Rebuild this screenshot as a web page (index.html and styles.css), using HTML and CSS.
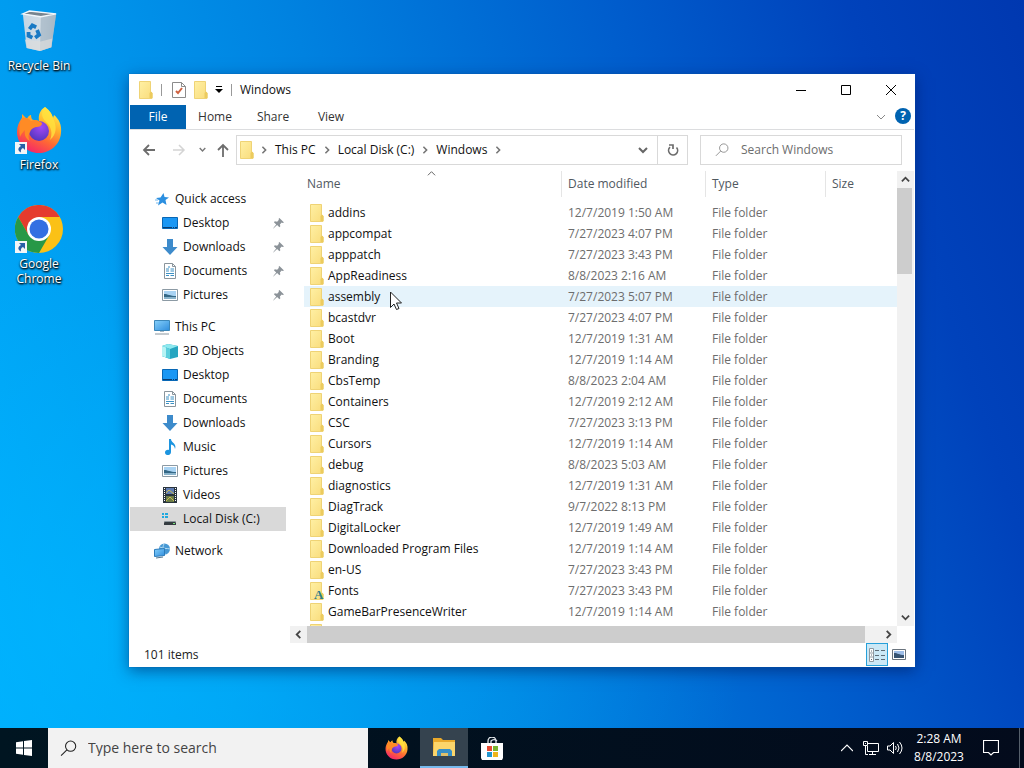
FILE: index.html
```
<!DOCTYPE html>
<html lang="en">
<head>
<meta charset="utf-8">
<title>Windows</title>
<link rel="stylesheet" href="styles.css">
</head>
<body>
<svg class="defs" aria-hidden="true">
  <defs>
    <linearGradient id="g-folder" x1="0" y1="0" x2="1" y2="1"><stop offset="0" stop-color="#fff0a4"/><stop offset="1" stop-color="#f9dc7c"/></linearGradient>
    <linearGradient id="g-blue" x1="0" y1="0" x2="1" y2="1"><stop offset="0" stop-color="#86d0fb"/><stop offset="1" stop-color="#2f8ddd"/></linearGradient>
    <linearGradient id="g-ff" x1=".8" y1="0" x2=".3" y2="1"><stop offset="0" stop-color="#fff44f"/><stop offset=".35" stop-color="#ffb52c"/><stop offset=".65" stop-color="#ff6a33"/><stop offset="1" stop-color="#f5236c"/></linearGradient>
    <radialGradient id="g-ffc" cx=".6" cy=".3" r=".8"><stop offset="0" stop-color="#a347f5"/><stop offset="1" stop-color="#4a36b8"/></radialGradient>
    <linearGradient id="g-bin" x1="0" y1="0" x2="1" y2="0"><stop offset="0" stop-color="#c3d5e4"/><stop offset=".6" stop-color="#d3dde5"/><stop offset="1" stop-color="#a4b4c2"/></linearGradient>
  </defs>
  <symbol id="i-folder" viewBox="0 0 14 18"><path d="M.5.5h11v10.500l1.500 1v5.500h-12.500z" fill="url(#g-folder)" stroke="#efd375"/><path d="M10.500 17v-5l1.500-1.500 1.500 1.500v5z" fill="#eccb5e"/></symbol>
  <symbol id="i-fonts" viewBox="0 0 14 18"><use href="#i-folder" width="14" height="18"/><text x="4" y="17" class="glyph">A</text></symbol>
  <symbol id="i-star" viewBox="0 0 16 16"><path d="M9.500 2l1 4 4.500.5-3.500 2.500 1 5-4-2.500-4.500 3 1.500-5L2 7l4.500-.5z" fill="#2b8fe0"/><path d="M1 9h3M2 12h3" stroke="#74b8ec"/></symbol>
  <symbol id="i-desktop" viewBox="0 0 16 16"><path d="M.5 2.500h15v11h-15z" fill="#1a97f4" stroke="#0867b5"/><path d="M1 12.500h14" stroke="#0a3d70" stroke-dasharray="9 1 1 1"/></symbol>
  <symbol id="i-down" viewBox="0 0 16 16"><path d="M5 0h6v8h4.500L8 16 .5 8H5z" fill="#3d8bcb"/></symbol>
  <symbol id="i-doc" viewBox="0 0 16 16"><path d="M2.500.5h8l3 3v12h-11z" fill="#fff" stroke="#8a959c"/><path d="M10.500.5v3h3" fill="none" stroke="#8a959c"/><path d="M4 6h3M8.500 6h3.500M4 8h3M8.500 8h3.500M4 10.500h8M4 12.500h3M8.500 12.500h3.500M6 4h2" stroke="#3c91c4"/></symbol>
  <symbol id="i-pic" viewBox="0 0 16 16"><path d="M.5 2.500h15v11h-15z" fill="#fff" stroke="#8c9aa4"/><path d="M2 4h12v8H2z" fill="#a9d3f3"/><path d="M2 7c4 0 6 2 12 2v3H2z" fill="#356886"/><path d="M2 10h12v2H2z" fill="#89b3cb"/></symbol>
  <symbol id="i-pc" viewBox="0 0 16 16"><path d="M.5 1.500h15v10h-15z" fill="url(#g-blue)" stroke="#3c87b9"/><path d="M6 12h4v1H6z" fill="#a8b9c4"/><path d="M1 15h14" stroke="#8996a0"/></symbol>
  <symbol id="i-cube" viewBox="0 0 16 16"><path d="M0 3l6-2 10 2v11l-8 2-8-3z" fill="#25a5c0"/><path d="M0 3l6-2 10 2-8 3z" fill="#8ee9ef"/><path d="M0 3l8 3v10l-8-3z" fill="#5bcfdd"/><path d="M0 3l4 1.500v10L0 13z" fill="#b6f3f4"/></symbol>
  <symbol id="i-music" viewBox="0 0 16 16"><path d="M7 0h2c0 4 6 4 4 10-.500-3-2-4-4-4.500V13c0 4-6 4-6 .5 0-2 2-3 4-2.500z" fill="#1c94df"/></symbol>
  <symbol id="i-video" viewBox="0 0 16 16"><path d="M1 0h14v16H1z" fill="#29343e"/><path d="M4 1h8v6H4z" fill="#617db3"/><path d="M4 9h8v6H4z" fill="#6c7d48"/><path d="M4 6l3-3 5 4M4 14l4-4 4 4" stroke="#c9ba51" fill="none"/><path d="M2.500 1v14M13.500 1v14" stroke="#fff" stroke-dasharray="1 1"/></symbol>
  <symbol id="i-disk" viewBox="0 0 16 16"><path d="M0 2h2v2H0zM3 2h3v2H3zM0 5h2v2H0zM3 5h3v2H3z" fill="#20a9df"/><path d="M3 10h10l1 2v2H2v-2z" fill="#343b40"/><path d="M3 10h10l1 1H2z" fill="#8e989e"/><path d="M11 12h2v1h-2z" fill="#7ae57c"/></symbol>
  <symbol id="i-net" viewBox="0 0 16 16"><circle cx="10.500" cy="6" r="5.500" fill="#4798d4"/><path d="M6 4c3 2 7 1 10 2M10 1c-2 4-1 7 1 10" stroke="#b7def3" fill="none"/><path d="M.5 6.500l10-1v7l-10 1z" fill="url(#g-blue)" stroke="#2b7bbb"/><path d="M2 15l7-1" stroke="#52758e"/></symbol>
  <symbol id="i-pin" viewBox="0 0 12 12"><path d="M7 0l5 5-1.500.5-1-.5-2 2 .5 2-1 1-2.500-2.500L1 11l-1 1 1-2 2.500-3L1 4.500l1-1 2.500.5 2-2-.5-1z" fill="#8c9399"/></symbol>
  <symbol id="i-chev" viewBox="0 0 10 10"><path d="M1 3l4 4 4-4" fill="none" stroke="currentColor" stroke-width="2"/></symbol>
  <symbol id="i-chev-thin" viewBox="0 0 10 10"><path d="M1 3l4 4 4-4" fill="none" stroke="currentColor"/></symbol>
  <symbol id="i-glass" viewBox="0 0 16 16"><circle cx="10" cy="5.800" r="4.800" fill="none" stroke="currentColor"/><path d="M6.500 9.200L1 14.700" stroke="currentColor"/></symbol>
  <symbol id="i-firefox" viewBox="0 0 46 48"><path d="M29 1c5 4 7 7 8 11l1-3c5 4 8 10 7 18-1 12-11 20-22 20C10 47 1 37 1 26c0-6 2-10 5-14V8l5 5c1-3 3-4 4-4 0 3 1 5 3 5l5 1c-1-6 1-11 6-14z" fill="url(#g-ff)"/><path d="M29 1c5 4 7 7 8 11 4 8 4 16-3 22 3-7 1-13-3-17-5-5-7-9-2-16z" fill="#ffe23e" opacity=".8"/><circle cx="23" cy="25" r="10" fill="url(#g-ffc)"/><path d="M6 12c5-1 7 1 9 3 4-2 7-1 11 2 0 3-3 4-6 4-3 1-5 2-6 5-2 3-2 6 0 9-4-2-6-6-5-11-2 2-4 4-5 7-1-7-1-12 2-19z" fill="#ff8b25"/></symbol>
  <symbol id="i-chrome" viewBox="0 0 48 48"><circle cx="24" cy="24" r="24" fill="#fbc116"/><path d="M3.200 12A24 24 0 0 1 44.800 12H24L13.600 30z" fill="#e53b2e"/><path d="M3.200 12A24 24 0 0 0 24 48l10.400-18-20.800 0z" fill="#279847"/><circle cx="24" cy="24" r="12" fill="#fff"/><circle cx="24" cy="24" r="9.500" fill="#346fe2"/></symbol>
  <symbol id="i-link" viewBox="0 0 12 12"><path d="M0 0h12v12H0z" fill="#f3f5f7"/><path d="M4 2h6v6L8 6C6 7 5.500 8.500 6 10.500 2.500 8.500 2.500 6 6 4z" fill="#285fa7"/></symbol>
</svg>

<main class="desktop">
  <nav class="shortcuts" aria-label="Desktop">
    <button class="shortcut"><span class="art"><svg class="bin" viewBox="0 0 40 44"><path d="M3 4L10 1l28 3-5 35-12 4-14-3z" fill="url(#g-bin)"/><path d="M22 7l16-3-5 35-12 4z" fill="#a9bac8" opacity=".8"/><path d="M3 4l7-3 28 3-16 3z" fill="#77848e" stroke="#f1f6fa" stroke-width="1.500"/><path d="M5 31l17 2 12-3-1 9-12 4-14-3z" fill="#ddd" opacity=".7"/><g fill="none" stroke="#1879c4" stroke-width="4"><path d="M10 20l3-4 4 2"/><path d="M18 21l2 5-4 3"/><path d="M13 29l-4-2v-4"/></g></svg></span><span>Recycle Bin</span></button>
    <button class="shortcut"><span class="art"><svg class="fox"><use href="#i-firefox"/></svg><svg class="link"><use href="#i-link"/></svg></span><span>Firefox</span></button>
    <button class="shortcut"><span class="art"><svg class="chrome"><use href="#i-chrome"/></svg><svg class="link"><use href="#i-link"/></svg></span><span>Google Chrome</span></button>
  </nav>

  <section class="window" aria-label="Windows">
    <header class="titlebar">
      <svg class="folder"><use href="#i-folder"/></svg><i class="bar"></i>
      <button aria-label="Properties"><svg class="props" viewBox="0 0 14 16"><path d="M.5.5h9l4 4v11H.5z" fill="#fff" stroke="#8b8b8b"/><path d="M9.500.5v4h4" fill="none" stroke="#8b8b8b"/><path d="M4 9l2 2 4-5" fill="none" stroke="#cf6240" stroke-width="2"/></svg></button>
      <button aria-label="New folder"><svg class="folder"><use href="#i-folder"/></svg></button>
      <button aria-label="Customize toolbar"><svg class="custom" viewBox="0 0 8 8"><path d="M1 .5h6" stroke="#000"/><path d="M0 3h8L4 7z"/></svg></button><i class="bar"></i>
      <h1>Windows</h1>
      <div class="controls">
        <button aria-label="Minimize"><svg viewBox="0 0 10 10"><path d="M0 5.500h10" stroke="#000"/></svg></button>
        <button aria-label="Maximize"><svg viewBox="0 0 10 10"><path d="M.5.5h9v9h-9z" fill="none" stroke="#000"/></svg></button>
        <button aria-label="Close"><svg viewBox="0 0 10 10"><path d="M0 0l10 10M10 0L0 10" stroke="#000"/></svg></button>
      </div>
    </header>
    <div class="ribbon">
      <button class="file">File</button><button>Home</button><button>Share</button><button>View</button>
      <button class="expand" aria-label="Expand ribbon"><svg><use href="#i-chev-thin"/></svg></button>
      <button class="help" aria-label="Help">?</button>
    </div>
    <div class="navigate">
      <div class="history">
        <button aria-label="Back"><svg viewBox="0 0 14 14"><path d="M13 7H2M7 2L2 7l5 5" fill="none" stroke="#6d6d6d" stroke-width="1.800"/></svg></button>
        <button aria-label="Forward"><svg viewBox="0 0 14 14"><path d="M1 7h11M7 2l5 5-5 5" fill="none" stroke="#d4d4d4" stroke-width="1.500"/></svg></button>
        <button class="recent" aria-label="Recent locations"><svg class="tiny"><use href="#i-chev"/></svg></button>
        <button class="up" aria-label="Up"><svg viewBox="0 0 14 14"><path d="M7 14V2M2 7l5-5 5 5" fill="none" stroke="#6d6d6d" stroke-width="1.800"/></svg></button>
      </div>
      <div class="address">
        <svg class="folder"><use href="#i-folder"/></svg><svg class="sep"><use href="#i-chev"/></svg>
        <a href="#pc">This PC</a><svg class="sep"><use href="#i-chev"/></svg>
        <a href="#c">Local Disk (C:)</a><svg class="sep"><use href="#i-chev"/></svg>
        <a href="#windows">Windows</a><svg class="sep"><use href="#i-chev"/></svg>
        <button class="previous" aria-label="Previous locations"><svg><use href="#i-chev"/></svg></button>
        <button class="refresh" aria-label="Refresh"><svg viewBox="0 0 12 12"><path d="M9.500 3.500A4.500 4.500 0 1 1 3 3.200M2 1h4v4" fill="none" stroke="#6d6d6d" stroke-width="1.700"/></svg></button>
      </div>
      <label class="search"><svg><use href="#i-glass"/></svg><input type="search" placeholder="Search Windows" aria-label="Search Windows"></label>
    </div>

    <div class="body">
      <nav class="tree" aria-label="Navigation pane">
        <ul>
          <li><a href="#quick"><svg><use href="#i-star"/></svg>Quick access</a>
            <ul>
              <li><a href="#desktop"><svg><use href="#i-desktop"/></svg>Desktop<svg class="pin"><use href="#i-pin"/></svg></a></li>
              <li><a href="#downloads"><svg><use href="#i-down"/></svg>Downloads<svg class="pin"><use href="#i-pin"/></svg></a></li>
              <li><a href="#documents"><svg><use href="#i-doc"/></svg>Documents<svg class="pin"><use href="#i-pin"/></svg></a></li>
              <li><a href="#pictures"><svg><use href="#i-pic"/></svg>Pictures<svg class="pin"><use href="#i-pin"/></svg></a></li>
            </ul></li>
          <li><a href="#pc"><svg><use href="#i-pc"/></svg>This PC</a>
            <ul>
              <li><a href="#3d"><svg><use href="#i-cube"/></svg>3D Objects</a></li>
              <li><a href="#desktop"><svg><use href="#i-desktop"/></svg>Desktop</a></li>
              <li><a href="#documents"><svg><use href="#i-doc"/></svg>Documents</a></li>
              <li><a href="#downloads"><svg><use href="#i-down"/></svg>Downloads</a></li>
              <li><a href="#music"><svg><use href="#i-music"/></svg>Music</a></li>
              <li><a href="#pictures"><svg><use href="#i-pic"/></svg>Pictures</a></li>
              <li><a href="#videos"><svg><use href="#i-video"/></svg>Videos</a></li>
              <li><a class="selected" href="#c"><svg><use href="#i-disk"/></svg>Local Disk (C:)</a></li>
            </ul></li>
          <li><a href="#network"><svg><use href="#i-net"/></svg>Network</a></li>
        </ul>
      </nav>

      <div class="files">
        <div class="list">
          <table>
            <colgroup><col class="c-name"><col class="c-date"><col class="c-type"><col></colgroup>
            <thead><tr><th>Name<svg class="sort"><use href="#i-chev-thin"/></svg></th><th>Date modified</th><th>Type</th><th>Size</th></tr></thead>
            <tbody>
              <tr><td><svg><use href="#i-folder"/></svg>addins</td><td>12/7/2019 1:50 AM</td><td>File folder</td><td></td></tr>
              <tr><td><svg><use href="#i-folder"/></svg>appcompat</td><td>7/27/2023 4:07 PM</td><td>File folder</td><td></td></tr>
              <tr><td><svg><use href="#i-folder"/></svg>apppatch</td><td>7/27/2023 3:43 PM</td><td>File folder</td><td></td></tr>
              <tr><td><svg><use href="#i-folder"/></svg>AppReadiness</td><td>8/8/2023 2:16 AM</td><td>File folder</td><td></td></tr>
              <tr class="hover"><td><svg><use href="#i-folder"/></svg>assembly</td><td>7/27/2023 5:07 PM</td><td>File folder</td><td></td></tr>
              <tr><td><svg><use href="#i-folder"/></svg>bcastdvr</td><td>7/27/2023 4:07 PM</td><td>File folder</td><td></td></tr>
              <tr><td><svg><use href="#i-folder"/></svg>Boot</td><td>12/7/2019 1:31 AM</td><td>File folder</td><td></td></tr>
              <tr><td><svg><use href="#i-folder"/></svg>Branding</td><td>12/7/2019 1:14 AM</td><td>File folder</td><td></td></tr>
              <tr><td><svg><use href="#i-folder"/></svg>CbsTemp</td><td>8/8/2023 2:04 AM</td><td>File folder</td><td></td></tr>
              <tr><td><svg><use href="#i-folder"/></svg>Containers</td><td>12/7/2019 2:12 AM</td><td>File folder</td><td></td></tr>
              <tr><td><svg><use href="#i-folder"/></svg>CSC</td><td>7/27/2023 3:13 PM</td><td>File folder</td><td></td></tr>
              <tr><td><svg><use href="#i-folder"/></svg>Cursors</td><td>12/7/2019 1:14 AM</td><td>File folder</td><td></td></tr>
              <tr><td><svg><use href="#i-folder"/></svg>debug</td><td>8/8/2023 5:03 AM</td><td>File folder</td><td></td></tr>
              <tr><td><svg><use href="#i-folder"/></svg>diagnostics</td><td>12/7/2019 1:31 AM</td><td>File folder</td><td></td></tr>
              <tr><td><svg><use href="#i-folder"/></svg>DiagTrack</td><td>9/7/2022 8:13 PM</td><td>File folder</td><td></td></tr>
              <tr><td><svg><use href="#i-folder"/></svg>DigitalLocker</td><td>12/7/2019 1:49 AM</td><td>File folder</td><td></td></tr>
              <tr><td><svg><use href="#i-folder"/></svg>Downloaded Program Files</td><td>12/7/2019 1:14 AM</td><td>File folder</td><td></td></tr>
              <tr><td><svg><use href="#i-folder"/></svg>en-US</td><td>7/27/2023 3:43 PM</td><td>File folder</td><td></td></tr>
              <tr><td><svg><use href="#i-fonts"/></svg>Fonts</td><td>7/27/2023 3:43 PM</td><td>File folder</td><td></td></tr>
              <tr><td><svg><use href="#i-folder"/></svg>GameBarPresenceWriter</td><td>12/7/2019 1:14 AM</td><td>File folder</td><td></td></tr>
              <tr><td><svg><use href="#i-folder"/></svg></td><td></td><td></td><td></td></tr>
            </tbody>
          </table>
        </div>
        <div class="vscroll"><button aria-label="Scroll up"><svg class="rot-up"><use href="#i-chev"/></svg></button><i class="thumb"></i><button class="end" aria-label="Scroll down"><svg><use href="#i-chev"/></svg></button></div>
        <div class="hscroll"><button aria-label="Scroll left"><svg class="rot-left"><use href="#i-chev"/></svg></button><i class="thumb"></i><button class="end" aria-label="Scroll right"><svg class="rot-right"><use href="#i-chev"/></svg></button></div>
      </div>
    </div>
    <footer class="status"><span>101 items</span>
      <button class="view on" aria-label="Details view"><svg viewBox="0 0 17 14"><path d="M.5.5h4v13h-4zM.5 5h4M.5 9h4" fill="#fff" stroke="#8e99a1"/><path d="M2 3h1M2 7h1M2 11.500h1M6 2.500h4M12 2.500h4M6 7.500h4M12 7.500h4M6 11.500h4M12 11.500h4" stroke="#5d6c77"/></svg></button>
      <button class="view" aria-label="Thumbnail view"><svg viewBox="0 0 14 12"><path d="M.5.5h13v10H.5z" fill="#fff" stroke="#69737d"/><path d="M2 2h10v7H2z" fill="#9dbde8"/><path d="M2 4c4 0 5 2 10 2v3H2z" fill="#375473"/></svg></button>
    </footer>
  </section>
  <svg class="cursor" viewBox="0 0 12 19"><path d="M.5 1v15.500l3.500-3.500 2.500 5.500 2.500-1-2.500-5.500h5z" fill="#fff" stroke="#222"/></svg>
</main>

<footer class="taskbar">
  <button class="task" aria-label="Start"><svg class="start" viewBox="0 0 16 16"><path d="M0 2.200L7 1.200V7.500H0zM8 1L16 0V7.500H8zM0 8.500h7v6.300L0 13.800zM8 8.500h8V16L8 15z" fill="#fff"/></svg></button>
  <label class="find"><svg><use href="#i-glass"/></svg><input type="search" placeholder="Type here to search" aria-label="Type here to search"></label>
  <div class="apps">
    <button class="task" aria-label="Firefox"><svg class="ff"><use href="#i-firefox"/></svg></button>
    <button class="task active" aria-label="File Explorer"><svg class="fe" viewBox="0 0 22 19"><path d="M0 0h8l2 2h12v16H0z" fill="#e9a92b"/><path d="M1 4h21v14H0z" fill="#fbd56b"/><path d="M4 18v-5l2-2h11l2 2v5h-4v-3H8v3z" fill="#368fc7"/><path d="M8 18v-3h7v3z" fill="#dfc06a"/></svg></button>
    <button class="task" aria-label="Microsoft Store"><svg class="store" viewBox="0 0 22 23"><path d="M7 8V4a4 4 0 0 1 8 0v4M10 8V4a4 4 0 0 1 6 0" fill="none" stroke="#e4e8eb" stroke-width="1.300"/><path d="M0 6h22v15l-1 2H1l-1-2z" fill="#fff"/><path d="M6 9h5v5H6z" fill="#e64a31"/><path d="M12 9h5v5h-5z" fill="#7ab530"/><path d="M6 15h5v5H6z" fill="#2396cf"/><path d="M12 15h5v5h-5z" fill="#efb51b"/></svg></button>
  </div>
  <div class="tray">
    <button aria-label="Show hidden icons"><svg class="caret" viewBox="0 0 12 8"><path d="M0 7l6-6 6 6" fill="none" stroke="#fff" stroke-width="1.200"/></svg></button>
    <button aria-label="Network"><svg class="lan" viewBox="0 0 16 14"><path d="M5 2.500h10.500v8H4.500V5M9.500 11v2.500M6 13.500h7M.5.500h4v4h-4zM2.500 5v8.500H5M2 2.500h1" fill="none" stroke="#fff"/></svg></button>
    <button aria-label="Volume"><svg class="vol" viewBox="0 0 17 14"><path d="M.5 5h2.500l3.500-3.500v11L3 9H.5zM8.500 5q1.500 2 0 4M10.500 3q3 4 0 8M12.500 1q5 6 0 12" fill="none" stroke="#fff"/></svg></button>
    <button class="clock"><span>2:28 AM</span><span>8/8/2023</span></button>
    <button class="notify" aria-label="Notifications"><svg viewBox="0 0 16 16"><path d="M.5.5h15v12h-5l-2.500 2.500-2.500-2.500h-5z" fill="none" stroke="#fff" stroke-width="1.200"/></svg></button>
    <button class="peek" aria-label="Show desktop"></button>
  </div>
</footer>
</body>
</html>
```
FILE: styles.css
```
* { box-sizing: border-box; }
html, body { height: 100%; }
body {
  margin: 0;
  display: flex;
  flex-direction: column;
  overflow: hidden;
  font: 12px/16px "Open Sans", "Noto Sans", sans-serif;
  color: #111;
  background:
    radial-gradient(ellipse at 8% 82%, rgba(0, 184, 255, .6), rgba(0, 184, 255, 0) 50%),
    linear-gradient(72deg, #00acfc 0%, #009cf0 20%, #0082e0 42%, #005ccc 68%, #0042bb 86%, #0038b0 100%);
}
.defs { position: absolute; width: 0; height: 0; }
button { font: inherit; color: inherit; border: 0; padding: 0; background: none; display: flex; align-items: center; justify-content: center; }
a { color: inherit; text-decoration: none; }
svg { flex: none; display: block; }
input { font: inherit; color: inherit; border: 0; padding: 0; background: none; min-width: 0; flex: 1; outline: 0; }
.folder { width: 14px; height: 18px; }
.glyph { font: bold 13px "Liberation Serif", serif; fill: #2a7d8c; }

.desktop { flex: 1; min-height: 0; position: relative; }
.shortcuts { display: flex; flex-direction: column; width: 78px; padding-top: 7px; }
.shortcut { flex-direction: column; justify-content: flex-start; height: 99px; color: #fff; line-height: 15px; text-shadow: 1px 1px 2px #000, 0 1px 2px #000; }
.shortcut > span:last-child { max-width: 64px; }
.art { position: relative; width: 48px; height: 51px; display: flex; align-items: flex-start; justify-content: center; }
.bin { width: 38px; height: 42px; margin-top: 3px; }
.fox { width: 46px; height: 48px; }
.chrome { width: 48px; height: 48px; }
.link { position: absolute; left: 0; bottom: 3px; width: 12px; height: 12px; }

.window { position: absolute; inset: 74px 109px 61px 129px; display: flex; flex-direction: column; background: #fff; border: 1px solid #fff; box-shadow: 0 0 1px #0a5ba5, 0 4px 14px rgba(0, 20, 80, .5); }
.titlebar { display: flex; align-items: center; height: 30px; flex: none; padding-left: 9px; }
.titlebar h1 { margin: 0; font: inherit; }
.bar { width: 1px; height: 12px; background: #999; margin: 0 8px; }
.props { width: 14px; height: 16px; margin: 0 8px 0 2px; }
.custom { width: 8px; height: 8px; margin-left: 7px; }
.controls { margin-left: auto; padding-right: 1px; display: flex; align-self: stretch; }
.controls button { width: 45px; }
.controls svg { width: 10px; height: 10px; }
.ribbon { display: flex; height: 25px; flex: none; border-bottom: 1px solid #dcdddf; color: #333; }
.ribbon button { width: 58px; }
.ribbon .file { width: 56px; background: #0063b1; color: #fff; }
.ribbon .expand { margin-left: auto; width: 20px; color: #888; }
.ribbon .expand svg { width: 10px; height: 10px; }
.ribbon .help { width: 16px; height: 16px; margin: 3px 3px 0 4px; border-radius: 50%; background: #0063b1; color: #fff; font-weight: 700; }

.navigate { display: flex; align-items: center; height: 39px; flex: none; padding-right: 12px; }
.history { display: flex; align-items: center; width: 106px; padding-left: 4px; }
.history button { width: 30px; height: 30px; }
.history svg { width: 14px; height: 14px; }
.history .recent { width: 17px; color: #777; }
.history .recent .tiny { width: 7px; height: 7px; }
.history .up { width: 24px; }
.address { flex: 1; display: flex; align-items: center; height: 30px; border: 1px solid #d9d9d9; padding-left: 3px; }
.address a { margin: 0 7px; }
.address .sep { width: 8px; height: 8px; color: #777; transform: rotate(-90deg); }
.address .folder + .sep { margin-left: 6px; }
.address .previous { margin-left: auto; width: 28px; color: #666; }
.previous svg { width: 10px; height: 10px; }
.address .refresh { width: 30px; align-self: stretch; border-left: 1px solid #d9d9d9; }
.refresh svg { width: 12px; height: 12px; }
.search { display: flex; align-items: center; width: 202px; height: 30px; margin-left: 12px; padding: 0 12px 0 14px; border: 1px solid #d9d9d9; color: #888; }
.search svg { width: 14px; height: 14px; margin-right: 12px; }
input::placeholder { color: #6d6d6d; opacity: 1; }

.body { flex: 1; min-height: 0; display: flex; }
.tree { width: 156px; flex: none; padding-top: 18px; overflow: hidden; }
.tree ul { list-style: none; margin: 0; padding: 0; }
.tree > ul > li { margin-bottom: 8px; }
.tree a { display: flex; align-items: center; height: 24px; padding: 0 2px 0 24px; gap: 5px; white-space: nowrap; }
.tree li li a { padding-left: 32px; }
.tree a svg { width: 16px; height: 16px; }
.tree a .pin { width: 11px; height: 11px; margin-left: auto; }
.tree .selected { background: #d9d9d9; }

.files { flex: 1; min-width: 0; margin-left: 4px; display: grid; grid-template: 1fr 17px / 1fr 17px; }
.list { overflow: hidden; min-height: 0; padding-left: 14px; }
table { width: 100%; table-layout: fixed; border-collapse: collapse; }
.c-name { width: 257px; }
.c-date { width: 144px; }
.c-type { width: 120px; }
th, td { padding: 0 0 0 7px; text-align: left; font-weight: 400; white-space: nowrap; }
th { height: 30px; color: #50585f; position: relative; background: linear-gradient(#e5e5e5, #e5e5e5) no-repeat left center / 1px 26px; }
th:first-child { padding-left: 3px; background: none; }
thead::after { content: ""; display: block; height: 3px; }
.sort { position: absolute; left: 48%; top: 0; width: 9px; height: 9px; transform: rotate(180deg); color: #555; }
td { height: 21px; color: #6d6d6d; }
td:first-child { display: flex; align-items: center; gap: 4px; padding-left: 6px; color: #111; }
td svg { width: 14px; height: 18px; }
.hover { background: #e5f3fb; }
.vscroll, .hscroll { display: flex; background: #f1f1f1; color: #444; }
.vscroll { flex-direction: column; margin-top: 2px; }
.vscroll button, .hscroll button { width: 17px; height: 17px; }
.vscroll svg, .hscroll svg { width: 9px; height: 9px; }
.thumb { background: #cdcdcd; }
.vscroll .thumb { height: 19%; width: 15px; }
.hscroll .thumb { width: 92%; }
.hscroll { grid-column: 1; }
.vscroll .end { margin-top: auto; }
.hscroll .end { margin-left: auto; }
.rot-up { transform: rotate(180deg); }
.rot-left { transform: rotate(90deg); }
.rot-right { transform: rotate(-90deg); }
.status { display: flex; align-items: center; height: 23px; flex: none; padding: 0 4px 0 14px; color: #222; }
.status span { margin-right: auto; }
.view { width: 22px; height: 23px; }
.view svg { width: 14px; height: 12px; }
.view.on { background: #cbe8f6; border: 1px solid #26a0da; }
.view.on svg { width: 17px; height: 14px; }
.cursor { position: absolute; left: 390px; top: 291px; width: 12px; height: 19px; }

.taskbar { display: flex; height: 40px; flex: none; background: linear-gradient(90deg, #001521, #030b1c); color: #fff; }
.task { width: 48px; }
.start { width: 16px; height: 16px; }
.find { width: 320px; display: flex; align-items: center; padding-left: 12px; background: #f2f2f2; color: #222; font-size: 14px; }
.find svg { width: 17px; height: 17px; margin-right: 11px; }
.find input::placeholder { color: #444; }
.apps { display: flex; padding-left: 4px; }
.ff { width: 23px; height: 24px; }
.fe { width: 22px; height: 19px; }
.store { width: 22px; height: 23px; }
.active { background: #35434f; border-bottom: 2px solid #76b9ed; }
.tray { margin-left: auto; display: flex; }
.tray button { width: 24px; }
.caret { width: 12px; height: 8px; }
.lan { width: 16px; height: 14px; }
.vol { width: 17px; height: 14px; }
.tray .clock { width: 64px; flex-direction: column; line-height: 18px; }
.tray .notify { width: 40px; }
.notify svg { width: 16px; height: 16px; }
.tray .peek { width: 5px; margin-left: 8px; border-left: 1px solid #56606c; }
```
